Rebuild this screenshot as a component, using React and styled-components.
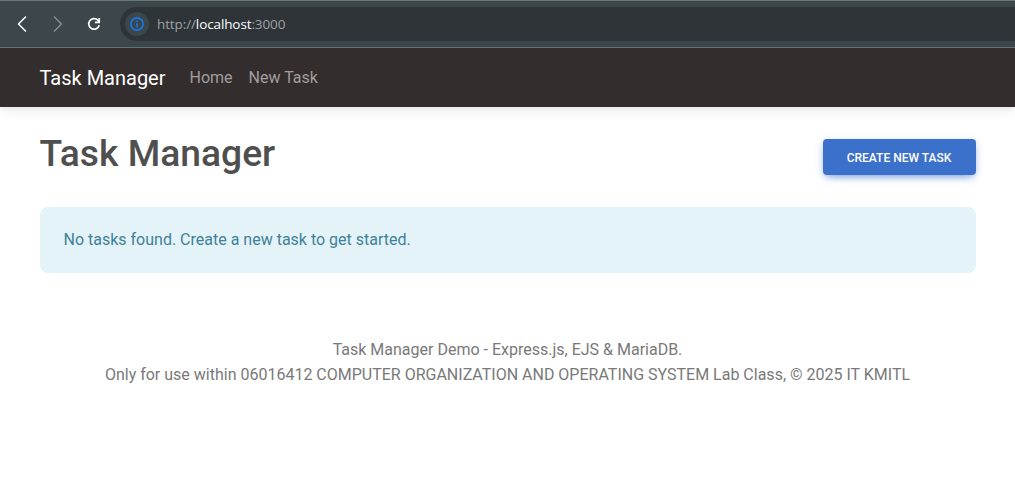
import React from "react";
import styled, { createGlobalStyle } from "styled-components";

const GlobalStyle = createGlobalStyle`
  *, *::before, *::after { box-sizing: border-box; }
  html, body { margin: 0; background: #fff; }
  body {
    font-family: Roboto, "Liberation Sans", sans-serif;
    font-size: 16px;
    line-height: 1.6;
    color: #4f4f4f;
    overflow: hidden;
  }
`;

const Page = styled.div`
  min-height: 482px;
  background: #fff;
`;

const BrowserBar = styled.div`
  display: flex;
  align-items: center;
  height: 48px;
  padding-left: 11px;
  background: #3b474a;
  border-top: 1px solid #6d7476;
  border-bottom: 1px solid #697275;
`;

const ToolButton = styled.span`
  display: flex;
  width: 22px;
  height: 22px;
  margin-right: ${(p) => p.$gap}px;
  color: ${(p) => (p.$disabled ? "#868d90" : "#ffffff")};
`;

const AddressBar = styled.div`
  display: flex;
  align-items: center;
  flex: 1;
  height: 34px;
  padding-left: 5px;
  background: #2e3437;
  border-radius: 17px 0 0 17px;
`;

const SiteInfo = styled.span`
  display: flex;
  align-items: center;
  justify-content: center;
  width: 24px;
  height: 24px;
  margin-right: 8px;
  border-radius: 50%;
  background: #3b474a;
`;

const Url = styled.span`
  font-family: "Open Sans", "Noto Sans", sans-serif;
  font-size: 13.5px;
  line-height: 20px;
  letter-spacing: -0.11px;
  color: #9ea1a2;
`;

const Host = styled.span`
  color: #ffffff;
`;

const Navbar = styled.nav`
  position: relative;
  display: flex;
  align-items: center;
  height: 59px;
  padding: 0 39.5px;
  background: #332d2d;
  box-shadow: 0 4px 12px 0 rgba(0, 0, 0, 0.07), 0 2px 4px rgba(0, 0, 0, 0.05);
`;

const Brand = styled.span`
  margin-right: 24px;
  font-size: 20px;
  line-height: 32px;
  color: #fff;
`;

const NavLink = styled.a`
  margin-right: 16px;
  color: #a19e9e;
`;

const Content = styled.main`
  padding: 24px 39.5px 0;
`;

const Header = styled.div`
  display: flex;
  align-items: center;
  justify-content: space-between;
  height: 52px;
  margin-bottom: 24px;
`;

const Title = styled.h1`
  margin: 0 0 8px;
  font-size: 37.225px;
  font-weight: 500;
  line-height: 1.2;
`;

const Button = styled.button`
  width: 153px;
  height: 36px;
  padding: 2px 0 0;
  border: 0;
  border-radius: 4px;
  background: #3b71ca;
  box-shadow: 0 4px 9px -4px rgba(59, 113, 202, 0.8), 0 2px 8px rgba(59, 113, 202, 0.22);
  color: #fff;
  font-family: inherit;
  font-size: 12px;
  font-weight: 500;
  line-height: 18px;
  text-transform: uppercase;
`;

const Alert = styled.div`
  height: 66px;
  padding: 20px 24px;
  border-radius: 8px;
  background: #e4f3f8;
  color: #40819a;
`;

const Footer = styled.footer`
  padding-top: 64px;
  text-align: center;
  color: #797979;
`;

const FooterLine = styled.div`
  line-height: 25px;
`;

const ArrowIcon = ({ forward }) => (
  <svg width="22" height="22" viewBox="0 0 22 22" fill="none" stroke="currentColor" strokeWidth="1.5" strokeLinecap="round" strokeLinejoin="round">
    <path d={forward ? "M7.5 4l7 7-7 7" : "M14.5 4l-7 7 7 7"} />
  </svg>
);

const ReloadIcon = () => (
  <svg width="22" height="22" viewBox="0 0 22 22" fill="none" stroke="currentColor" strokeWidth="1.7">
    <path d="M16.2 12.2A5.3 5.3 0 1 1 14.9 7.2L16.4 8.8" />
    <path d="M16.2 5v4.3h-4.3" />
  </svg>
);

const InfoIcon = () => (
  <svg width="14" height="14" viewBox="0 0 14 14" fill="none" stroke="#1a73e8">
    <circle cx="7" cy="7" r="6.1" strokeWidth="1.7" />
    <path d="M7 6.2v4M7 3.5v1.5" strokeWidth="1.7" />
  </svg>
);

export default function App() {
  return (
    <Page>
      <GlobalStyle />
      <BrowserBar>
        <ToolButton $gap={14}><ArrowIcon /></ToolButton>
        <ToolButton $gap={14} $disabled><ArrowIcon forward /></ToolButton>
        <ToolButton $gap={15}><ReloadIcon /></ToolButton>
        <AddressBar>
          <SiteInfo><InfoIcon /></SiteInfo>
          <Url>http://<Host>localhost</Host>:3000</Url>
        </AddressBar>
      </BrowserBar>
      <Navbar>
        <Brand>Task Manager</Brand>
        <NavLink>Home</NavLink>
        <NavLink>New Task</NavLink>
      </Navbar>
      <Content>
        <Header>
          <Title>Task Manager</Title>
          <Button>Create New Task</Button>
        </Header>
        <Alert>No tasks found. Create a new task to get started.</Alert>
        <Footer>
          <FooterLine>Task Manager Demo - Express.js, EJS &amp; MariaDB.</FooterLine>
          <FooterLine>Only for use within 06016412 COMPUTER ORGANIZATION AND OPERATING SYSTEM Lab Class, © 2025 IT KMITL</FooterLine>
        </Footer>
      </Content>
    </Page>
  );
}
